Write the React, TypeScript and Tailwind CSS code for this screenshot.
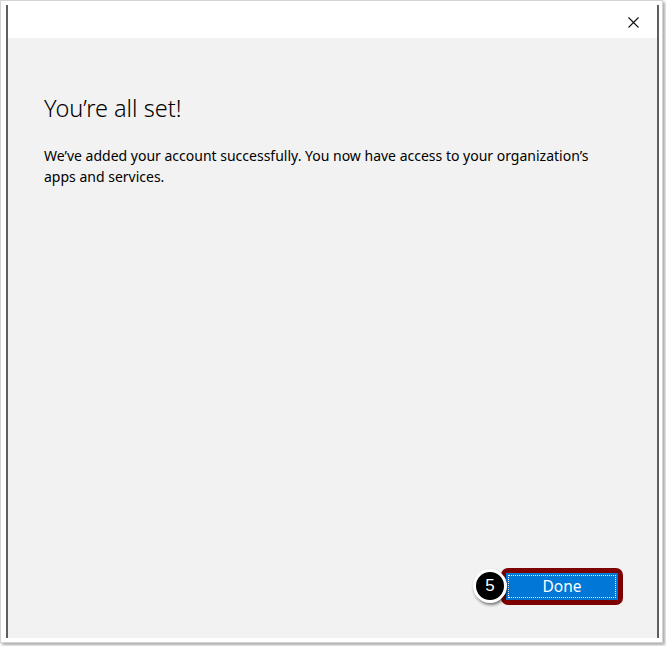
export default function App() {
  return (
    <div className="w-[666px] h-[646px] bg-white" style={{ fontFamily: '"Noto Sans", "Open Sans", sans-serif' }}>
      <div className="w-[663px] h-[643px] border border-[#d4d4d4] bg-white shadow-[2px_2px_3px_rgba(0,0,0,0.35)] pl-[5px] pt-[4px] pr-[3px] pb-[4px]">
        <div className="flex h-full flex-col border-x-2 border-[#5f5f5f] bg-[#f2f2f2]">
          <div className="flex h-[33px] shrink-0 items-center justify-end bg-white pr-[18px]">
            <svg width="11" height="11" viewBox="0 0 11 11" className="mt-[1px]">
              <path d="M0.5 0.5 L10.5 10.5 M10.5 0.5 L0.5 10.5" stroke="#111" strokeWidth="1.1" fill="none" />
            </svg>
          </div>

          <div className="flex flex-1 flex-col px-[36px] pt-[54px] pb-[33px]">
            <h1 className="text-[23.5px] leading-[32px] font-light text-black">You’re all set!</h1>
            <p className="mt-[21px] text-[14px] leading-[21px] text-black">
              We’ve added your account successfully. You now have access to your organization’s
              <br />
              apps and services.
            </p>

            <div className="mt-auto flex justify-end">
              <div className="relative mr-[-2px]">
                <div className="rounded-[7px] bg-[#7d0000] p-[5px]">
                  <button
                    type="button"
                    className="flex h-[27px] w-[112px] items-center justify-center bg-[#0078d7] p-[2px]"
                  >
                    <span className="flex h-full w-full items-center justify-center border border-dotted border-white text-[15.5px] text-white">
                      Done
                    </span>
                  </button>
                </div>
                <div className="absolute left-[-28px] top-[1px] flex h-[34px] w-[34px] items-center justify-center rounded-full border-[3px] border-white bg-black text-[17px] text-white shadow-[1px_2px_3px_rgba(0,0,0,0.5)]" style={{ fontFamily: '"Liberation Sans", Arial, sans-serif' }}>
                  5
                </div>
              </div>
            </div>
          </div>
        </div>
      </div>
    </div>
  );
}
